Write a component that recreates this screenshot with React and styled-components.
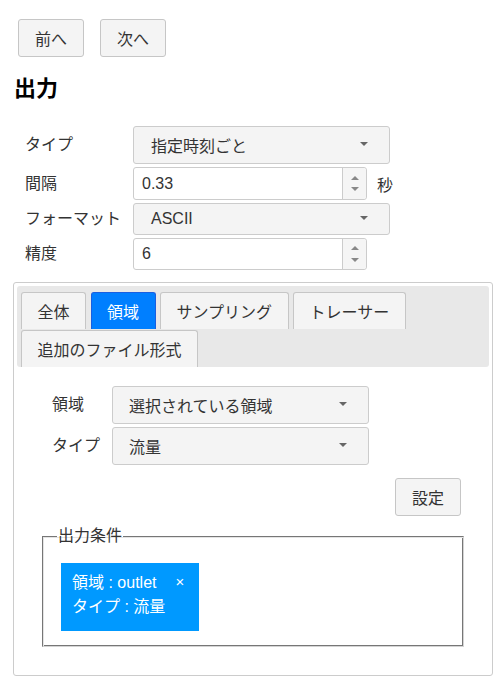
import React from 'react';
import styled, { createGlobalStyle } from 'styled-components';

const GlobalStyle = createGlobalStyle`
  body {
    margin: 0;
    background: #fff;
    color: #333;
    font-family: "Liberation Sans", "Noto Sans CJK JP", sans-serif;
    font-size: 16px;
  }
`;

const tabs = ['全体', '領域', 'サンプリング', 'トレーサー', '追加のファイル形式'];

const NumberField = ({ value, short }) => (
  <NumberInput short={short}>
    <Value>{value}</Value>
    <Spinner>
      <Arrow up />
      <Arrow />
    </Spinner>
  </NumberInput>
);

const App = () => {
  return (
    <>
      <GlobalStyle />
      <Page>
        <NavBar>
          <Button>前へ</Button>
          <Button>次へ</Button>
        </NavBar>
        <Heading>出力</Heading>
        <Form>
          <Label>タイプ</Label>
          <Select tall>指定時刻ごと</Select>
          <Label>間隔</Label>
          <Field>
            <NumberField value="0.33" />
            <Unit>秒</Unit>
          </Field>
          <Label>フォーマット</Label>
          <Select>ASCII</Select>
          <Label>精度</Label>
          <NumberField value="6" short />
        </Form>

        <Panel>
          <TabBar>
            {tabs.map((t) => (
              <Tab key={t} active={t === '領域'}>
                {t}
              </Tab>
            ))}
          </TabBar>
          <TabBody>
            <SubForm>
              <Label>領域</Label>
              <Select inner>選択されている領域</Select>
              <Label>タイプ</Label>
              <Select inner>流量</Select>
            </SubForm>
            <Actions>
              <Button>設定</Button>
            </Actions>
            <Conditions>
              <legend>出力条件</legend>
              <Chip>
                <div>領域 : outlet</div>
                <div>タイプ : 流量</div>
                <Close>×</Close>
              </Chip>
            </Conditions>
          </TabBody>
        </Panel>
      </Page>
    </>
  );
};

export default App;

const Page = styled.div`
  padding: 19px 11px 20px 13px;
`;

const NavBar = styled.div`
  display: flex;
  gap: 16px;
  padding-left: 5px;
`;

const Button = styled.button`
  height: 38px;
  padding: 0 16px;
  font: inherit;
  font-size: 16px;
  color: #333;
  background: #f4f4f4;
  border: 1px solid #c6c6c6;
  border-radius: 3px;
`;

const Heading = styled.h1`
  margin: 19px 0 0 1px;
  font-size: 22px;
  line-height: 26px;
  font-weight: 700;
  color: #000;
`;

const Form = styled.div`
  display: grid;
  grid-template-columns: 108px auto;
  justify-content: start;
  align-items: center;
  row-gap: 3px;
  margin: 24px 0 0 12px;
`;

const Label = styled.div`
  font-size: 16px;
  line-height: 24px;
  color: #333;
`;

const Select = styled.div`
  position: relative;
  box-sizing: border-box;
  width: 257px;
  height: ${(p) => (p.tall || p.inner ? '38px' : '32px')};
  display: flex;
  align-items: center;
  padding-left: ${(p) => (p.inner ? '16px' : '17px')};
  background: #f4f4f4;
  border: 1px solid #ccc;
  border-radius: 3px;
  font-size: 16px;
  color: #333;

  &::after {
    content: '';
    position: absolute;
    right: 21px;
    top: 50%;
    margin-top: -3px;
    border-left: 4px solid transparent;
    border-right: 4px solid transparent;
    border-top: 4px solid #666;
  }
`;

const Field = styled.div`
  display: flex;
  align-items: center;
  gap: 10px;
`;

const NumberInput = styled.div`
  box-sizing: border-box;
  width: 234px;
  height: ${(p) => (p.short ? '32px' : '33px')};
  display: flex;
  align-items: stretch;
  justify-content: space-between;
  background: #fff;
  border: 1px solid #ccc;
  border-radius: 3px;
  font-size: 16px;
  color: #333;
`;

const Value = styled.span`
  display: flex;
  align-items: center;
  padding-left: 8px;
`;

const Spinner = styled.div`
  width: 23px;
  display: flex;
  flex-direction: column;
  justify-content: space-evenly;
  align-items: center;
  background: #f5f5f5;
  border-left: 1px solid #ccc;
  border-radius: 0 3px 3px 0;
`;

const Arrow = styled.span`
  width: 0;
  height: 0;
  border-left: 4px solid transparent;
  border-right: 4px solid transparent;
  ${(p) =>
    p.up ? 'border-bottom: 4px solid #888;' : 'border-top: 4px solid #888;'}
`;

const Unit = styled.span`
  font-size: 16px;
  color: #333;
`;

const Panel = styled.section`
  box-sizing: border-box;
  width: 480px;
  margin-top: 12px;
  padding: 3px 3px 28px;
  border: 1px solid #ccc;
  border-radius: 3px;
`;

const TabBar = styled.div`
  display: flex;
  flex-wrap: wrap;
  gap: 1px 4.5px;
  padding: 6px 4px 0;
  background: #e8e8e8;
  border-radius: 3px;
`;

const Tab = styled.div`
  box-sizing: border-box;
  height: 37px;
  padding: 0 15.5px;
  display: flex;
  align-items: center;
  font-size: 16px;
  color: ${(p) => (p.active ? '#fff' : '#333')};
  background: ${(p) => (p.active ? '#007fff' : '#f4f4f4')};
  border: 1px solid ${(p) => (p.active ? '#1a5fe0' : '#c6c6c6')};
  border-bottom: none;
  border-radius: 3px 3px 0 0;
`;

const TabBody = styled.div`
  padding: 19px 25px 0 25px;
`;

const SubForm = styled.div`
  display: grid;
  grid-template-columns: 60px auto;
  justify-content: start;
  align-items: center;
  row-gap: 3px;
  padding-left: 10px;
`;

const Actions = styled.div`
  display: flex;
  justify-content: flex-end;
  margin-top: 13px;
  padding-right: 3px;
`;

const Conditions = styled.fieldset`
  margin: 10px 0 0 0;
  padding: 17px 18px 15px;
  border-style: solid;
  border-width: 1px;
  border-color: #767676 #d4d4d4 #d4d4d4 #767676;
  box-shadow: inset 1px 1px 0 #e4e4e4, inset -1px -1px 0 #767676;

  legend {
    margin-left: -4px;
    padding: 0 1px;
    font-size: 16px;
    line-height: 20px;
    color: #333;
  }
`;

const Chip = styled.div`
  position: relative;
  display: inline-block;
  padding: 8px 34px 12px 11px;
  background: #0099ff;
  color: #fff;
  font-size: 16px;
  line-height: 24px;
`;

const Close = styled.span`
  position: absolute;
  top: 9px;
  right: 15px;
  font-size: 15px;
  line-height: 20px;
`;
